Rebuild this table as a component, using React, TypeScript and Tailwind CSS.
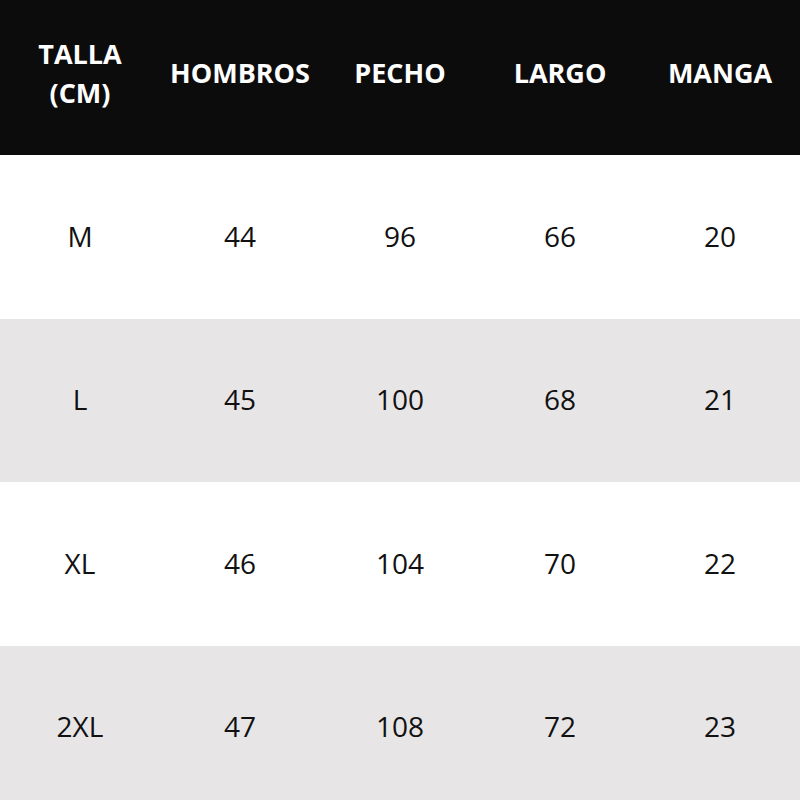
const headers = [["TALLA", "(CM)"], ["HOMBROS"], ["PECHO"], ["LARGO"], ["MANGA"]];

const rows = [
  ["M", "44", "96", "66", "20"],
  ["L", "45", "100", "68", "21"],
  ["XL", "46", "104", "70", "22"],
  ["2XL", "47", "108", "72", "23"],
];

export default function App() {
  return (
    <div
      className="h-[800px] w-[800px] overflow-hidden bg-white"
      style={{ fontFamily: '"Open Sans", "Liberation Sans", sans-serif' }}
    >
      <div className="grid h-[155px] grid-cols-5 bg-[#0d0c0c] pb-[10px] text-white">
        {headers.map((h) => (
          <div
            key={h[0]}
            className="flex flex-col items-center justify-center text-[27px] font-bold leading-[39px]"
          >
            {h.map((line) => (
              <span key={line}>{line}</span>
            ))}
          </div>
        ))}
      </div>
      {rows.map((r, i) => (
        <div
          key={r[0]}
          className={`grid h-[163.5px] grid-cols-5 pb-[2px] text-[28px] text-[#111] ${
            i % 2 === 1 ? "bg-[#e7e5e5]" : "bg-white"
          }`}
        >
          {r.map((c, j) => (
            <div key={j} className="flex items-center justify-center">
              {c}
            </div>
          ))}
        </div>
      ))}
    </div>
  );
}
